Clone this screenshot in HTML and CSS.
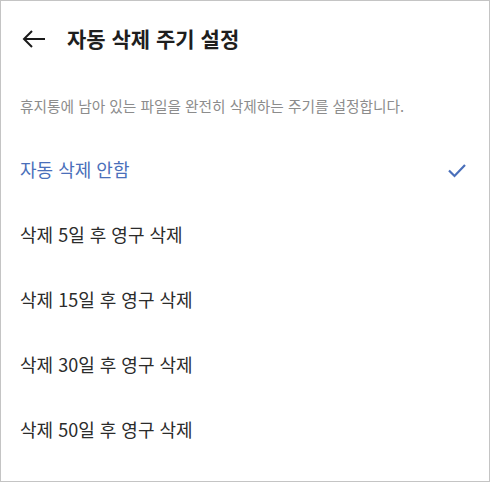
FILE: index.html
```html
<!DOCTYPE html>
<html lang="ko">
<head>
<meta charset="utf-8">
<link rel="stylesheet" href="styles.css">
</head>
<body>
<div class="screen">
  <header class="header">
    <svg class="back" width="24" height="20" viewBox="0 0 24 20"><path d="M23 10H2M10 2L2 10l8 8" fill="none" stroke="#1a1a1a" stroke-width="2"/></svg>
    <h1 class="title">자동 삭제 주기 설정</h1>
  </header>
  <p class="desc">휴지통에 남아 있는 파일을 완전히 삭제하는 주기를 설정합니다.</p>
  <ul class="options">
    <li class="option selected"><span>자동 삭제 안함</span>
      <svg class="check" width="20" height="16" viewBox="0 0 20 16"><path d="M2 8.5l5.5 5.5L18 3" fill="none" stroke="#4a6fba" stroke-width="2.2"/></svg>
    </li>
    <li class="option"><span>삭제 5일 후 영구 삭제</span></li>
    <li class="option"><span>삭제 15일 후 영구 삭제</span></li>
    <li class="option"><span>삭제 30일 후 영구 삭제</span></li>
    <li class="option"><span>삭제 50일 후 영구 삭제</span></li>
  </ul>
</div>
</body>
</html>
```
FILE: styles.css
```css
* { box-sizing: border-box; }
html, body { margin: 0; padding: 0; background: #fff; }
body { font-family: "Noto Sans CJK KR", sans-serif; }
.screen {
  width: 490px;
  height: 482px;
  border: 1px solid #c4c4c4;
  overflow: hidden;
}
.header {
  height: 76px;
  display: flex;
  align-items: center;
  padding-left: 21px;
}
.back { display: block; }
.title {
  margin: 0 0 0 21px;
  font-size: 21px;
  line-height: 1.2;
  font-weight: 700;
  color: #1e1e1e;
}
.desc {
  margin: 0;
  height: 56px;
  display: flex;
  align-items: center;
  padding-left: 19px;
  font-size: 14.7px;
  color: #8c8c8c;
}
.options { list-style: none; margin: 0; padding: 4px 0 0; }
.option {
  height: 65px;
  display: flex;
  align-items: center;
  justify-content: space-between;
  padding: 0 22px 0 19px;
  font-size: 18px;
  line-height: 1.2;
  color: #2b2b2b;
}
.option.selected { color: #4a6fba; }
.check { display: block; }
```
